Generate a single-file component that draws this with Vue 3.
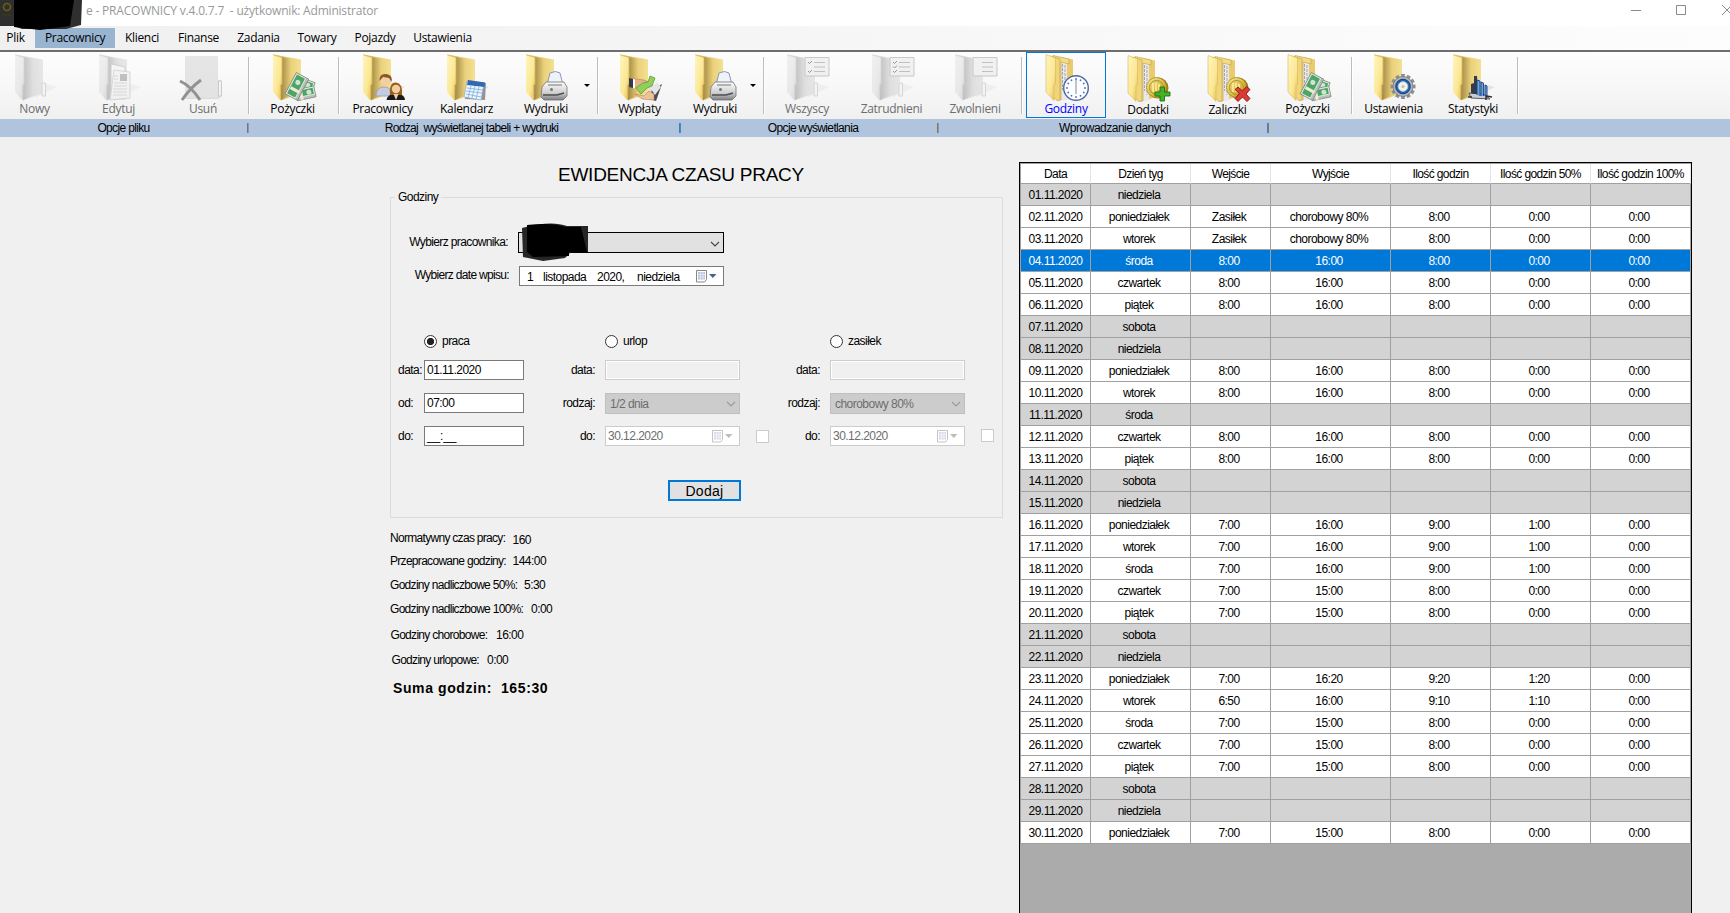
<script setup>
const menu = [
  { t: 'Plik', w: 35, c: 'first' }, { t: 'Pracownicy', w: 80, c: 'on' }, { t: 'Klienci', w: 54 },
  { t: 'Finanse', w: 59 }, { t: 'Zadania', w: 61 }, { t: 'Towary', w: 56 },
  { t: 'Pojazdy', w: 60 }, { t: 'Ustawienia', w: 75 },
]

// w: cell width, m: gap before the cell
const tools = [
  { t: 'Nowy', k: 'new', w: 69, m: 0, off: true },
  { t: 'Edytuj', k: 'edit', w: 99, m: 0, off: true },
  { t: 'Usuń', k: 'del', w: 70, m: 0, off: true },
  { sep: true, w: 2, m: 10 },
  { t: 'Pożyczki', k: 'cash', w: 70, m: 7.5 },
  { sep: true, w: 2, m: 10.5 },
  { t: 'Pracownicy', k: 'people', w: 70, m: 7.5 },
  { t: 'Kalendarz', k: 'cal', w: 70, m: 14 },
  { t: 'Wydruki', k: 'print', w: 70, m: 9.5 },
  { drop: true, w: 12, m: 0 },
  { sep: true, w: 2, m: 4 },
  { t: 'Wypłaty', k: 'pay', w: 70, m: 5.5 },
  { t: 'Wydruki', k: 'print', w: 70, m: 5.5 },
  { drop: true, w: 6, m: 0 },
  { sep: true, w: 2, m: 7 },
  { t: 'Wszyscy', k: 'listA', w: 70, m: 7, off: true },
  { t: 'Zatrudnieni', k: 'listB', w: 70, m: 14.5, off: true },
  { t: 'Zwolnieni', k: 'listC', w: 70, m: 13.5, off: true },
  { sep: true, w: 2, m: 11 },
  { t: 'Godziny', k: 'clock', files: true, w: 80, m: 3, on: true },
  { t: 'Dodatki', k: 'plus', files: true, w: 70, m: 7, low: true },
  { t: 'Zaliczki', k: 'minus', files: true, w: 70, m: 9.5, low: true },
  { t: 'Pożyczki', k: 'cash', files: true, w: 70, m: 10 },
  { sep: true, w: 2, m: 8.5 },
  { t: 'Ustawienia', k: 'gear', w: 70, m: 5.5 },
  { t: 'Statystyki', k: 'chart', w: 70, m: 9.5 },
  { sep: true, w: 2, m: 9 },
]

const groups = [
  { t: 'Opcje pliku', w: 247 }, { t: 'Rodzaj\u00a0 wyświetlanej tabeli + wydruki', w: 432 },
  { t: 'Opcje wyświetlania', w: 258 }, { t: 'Wprowadzanie danych', w: 330 },
]

const stats = [
  { l: 'Normatywny czas pracy:', v: '160', h: 23, x: 0, g: 122.5, d: 2 },
  { l: 'Przepracowane godziny:', v: '144:00', h: 24, x: 0, g: 122.5, d: 0 },
  { l: 'Godziny nadliczbowe 50%:', v: '5:30', h: 24, x: 0, g: 134, d: 0 },
  { l: 'Godziny nadliczbowe 100%:', v: '0:00', h: 26, x: 0, g: 141, d: 0 },
  { l: 'Godziny chorobowe:', v: '16:00', h: 25, x: 0.5, g: 106, d: 0 },
  { l: 'Godziny urlopowe:', v: '0:00', h: 27, x: 1.5, g: 97, d: 0 },
]

const heads = ['Data', 'Dzień tyg', 'Wejście', 'Wyjście', 'Ilość godzin', 'Ilość godzin 50%', 'Ilość godzin 100%']
const days = ['niedziela', 'poniedziałek', 'wtorek', 'środa', 'czwartek', 'piątek', 'sobota']
const e8 = ['8:00', '16:00', '8:00', '0:00', '0:00']
const s8 = ['Zasiłek', 'chorobowy 80%', '8:00', '0:00', '0:00']
const n9 = ['7:00', '16:00', '9:00', '1:00', '0:00']
const n8 = ['7:00', '15:00', '8:00', '0:00', '0:00']
const work = {
  2: s8, 3: s8, 4: e8, 5: e8, 6: e8, 9: e8, 10: e8, 12: e8, 13: e8,
  16: n9, 17: n9, 18: n9, 19: n8, 20: n8,
  23: ['7:00', '16:20', '9:20', '1:20', '0:00'],
  24: ['6:50', '16:00', '9:10', '1:10', '0:00'],
  25: n8, 26: n8, 27: n8, 30: n8,
}
const rows = Array.from({ length: 30 }, (_, i) => {
  const d = i + 1
  return {
    d, free: !work[d], sel: d === 4,
    cells: [String(d).padStart(2, '0') + '.11.2020', days[i % 7], ...(work[d] || ['', '', '', '', ''])],
  }
})
const ticks = Array.from({ length: 12 }, (_, i) => i * 30)
const teeth = Array.from({ length: 12 }, (_, i) => i * 30)
</script>

<template>
  <div class="win">
    <svg class="defs" width="0" height="0">
      <defs>
        <linearGradient id="gFront" x1="0" x2="1" y1="0" y2="1"><stop offset="0" stop-color="#fff6bd" /><stop offset=".6" stop-color="#fbe795" /><stop offset="1" stop-color="#e6bd4b" /></linearGradient>
        <linearGradient id="gBack" x1="0" x2="1"><stop offset="0" stop-color="#c9a24a" /><stop offset=".35" stop-color="#e3c366" /><stop offset="1" stop-color="#f3e193" /></linearGradient>
        <linearGradient id="gShade" x1="0" x2="1"><stop offset="0" stop-color="#000" stop-opacity=".28" /><stop offset="1" stop-color="#000" stop-opacity="0" /></linearGradient>
        <linearGradient id="gSilver" x1="0" x2="0" y1="0" y2="1"><stop offset="0" stop-color="#fbfbfb" /><stop offset=".6" stop-color="#cfcfd0" /><stop offset="1" stop-color="#7c7d80" /></linearGradient>
        <linearGradient id="gCoin" x1="0" x2="1" y1="0" y2="1"><stop offset="0" stop-color="#f8eb9b" /><stop offset=".6" stop-color="#d9b93c" /><stop offset="1" stop-color="#9b7a16" /></linearGradient>
      </defs>
    </svg>

    <header class="titlebar">
      <span class="caption">e - PRACOWNICY v.4.0.7.7&nbsp; - użytkownik: Administrator</span>
      <svg class="controls" width="104" height="26" viewBox="0 0 104 26" fill="none" stroke="#8a8a8a">
        <path d="M5 10.5h10M50.5 5.5h9v9h-9zM96 5l10 10M106 5l-10 10" />
      </svg>
      <svg class="smudge-a" width="84" height="31" viewBox="0 0 84 31">
        <path d="M0 0H82L81 25 66 29H22L14 26H0Z" fill="#1d1d1d" opacity=".92" />
        <path d="M14 0H74L70 26 40 30 14 27Z" fill="#000" />
        <circle cx="7" cy="7" r="3.5" fill="none" stroke="#6b600f" stroke-width="1.5" />
        <path d="M2 15h10" stroke="#4a430d" stroke-dasharray="2 1" />
      </svg>
    </header>

    <nav class="menu">
      <span v-for="m in menu" :key="m.t" :class="m.c" :style="{ width: m.w + 'px' }">{{ m.t }}</span>
    </nav>

    <div class="toolbar">
      <div v-for="(b, i) in tools" :key="i" class="cell" :class="{ off: b.off, on: b.on, low: b.low, sep: b.sep, drop: b.drop }" :style="{ width: b.w + 'px', marginLeft: b.m + 'px' }">
        <template v-if="b.t">
          <svg class="ico" width="48" height="48" viewBox="0 0 48 48">
            <template v-if="b.k === 'del'">
              <path d="M6 2H39V26H42V43L39 45H6Z" fill="#efc863" />
              <path d="M6 2H39V44H6Z" fill="#f3dc86" />
              <path d="M39.500 27h3v15h-3z" fill="#fff" stroke="#c2a24e" />
              <path d="M1 27Q12 32 21 46M22 26Q12 33 3 46" fill="none" stroke="#222" stroke-width="3" />
            </template>
            <template v-else>
              <path v-if="!b.files" d="M24 44L46 33 32 29Z" fill="#000" opacity=".08" />
              <template v-if="!b.files">
                <path d="M4 .5L32 5.500V39L12 46.500Z" fill="url(#gBack)" />
                <path d="M13 3L22 5V41L12 46Z" fill="url(#gShade)" />
                <path d="M4 .5L13 3.500V30L11.500 31V46.500L4 38Z" fill="url(#gFront)" />
                <path d="M4.500 1L13 3.500V30L11.500 31V46" fill="none" stroke="#dcb95a" stroke-width=".8" />
              </template>
              <template v-else>
                <path d="M19 3L31 5.500V42L20 46Z" fill="#eacb6c" />
                <path d="M17 6L25 8V46H17Z" fill="#e9e9ec" />
                <path d="M20.500 10V36M23 11V40" stroke="#a3a7b0" stroke-dasharray="3 1" />
                <path d="M11 1.500L27 5V10L19 8V46L15 46Z" fill="#f3dc86" stroke="#c9a552" stroke-width=".7" />
                <path d="M8 2L18 5V46L15 46.500 8 40Z" fill="#f0d679" stroke="#c9a552" stroke-width=".7" />
                <path d="M4 .5L13.500 4V30L12 31V46.500L4 38Z" fill="url(#gFront)" stroke="#d8b65e" stroke-width=".6" />
              </template>

              <path v-if="b.k === 'new'" d="M31 29h3.500v13H31z" fill="#fff" stroke="#bbb" />
              <g v-if="b.k === 'edit'">
                <path d="M16 10L30 13V45H16Z" fill="#fff" stroke="#999" stroke-width=".8" />
                <path d="M19 16L35 18V44L15 46Z" fill="#fafafa" stroke="#aaa" stroke-width=".8" />
                <path d="M25 20h7v7h-7z" fill="#888" />
                <path d="M19 22h4M19 25h4M19 29h13M19 32h13M18 35h14M18 38h14M18 41h14" stroke="#bbb" />
              </g>
              <g v-if="b.k === 'cash'">
                <g v-for="(n, j) in [[35, 30, 20], [36, 39, -12], [27, 32, -62]]" :key="j" :transform="`translate(${n[0]} ${n[1]}) rotate(${n[2]})`">
                  <path :d="j === 2 ? 'M-12-6H12V8H-12Z' : 'M-9-5H10V6H-9Z'" fill="#b9beb9" stroke="#777f78" stroke-width=".7" />
                  <path :d="j === 2 ? 'M-11-5H11V5H-11Z' : 'M-8-4H9V3H-8Z'" fill="#4da466" stroke="#d9eadb" />
                  <circle cx="4" r="2.500" fill="#cfe5cf" /><path d="M-4-4V6" stroke="#f0ead0" stroke-width="3" />
                </g>
              </g>
              <g v-if="b.k === 'people'">
                <path d="M17 42Q17 33 25 33T33 42Z" fill="#c5cce0" stroke="#8d95b0" stroke-width=".7" />
                <circle cx="26.500" cy="26" r="5.500" fill="#f3cfa6" />
                <path d="M20.500 27Q20 19.500 27 20T32.500 28L30 24 24 23Z" fill="#8b5720" />
                <path d="M27.500 46Q28 40 37 40T46 46Z" fill="#191919" />
                <path d="M31 41Q30 28 37 28.500T43 41Z" fill="#9a5f1b" />
                <circle cx="37" cy="35" r="4.200" fill="#f4cda0" /><path d="M34.500 40h5L37 46Z" fill="#f3d0aa" />
              </g>
              <g v-if="b.k === 'cal'">
                <path d="M24 27L43 29 42 46 22 45Z" fill="#8e949c" />
                <path d="M24 27L41 29 38 46 21 43Z" fill="#eef5fc" stroke="#93a6bb" stroke-width=".7" />
                <path d="M25 26L42 28.500 41.500 33 24 31Z" fill="#3068b4" />
                <path d="M24 34L40 36M23 37L39 39M23 40L38 43M28 32L25 44M32 32L29 44M36 33L33 45" stroke="#78b1e0" stroke-width=".8" />
              </g>
              <g v-if="b.k === 'print'">
                <path d="M25 31L28 19Q34 16 38 19L41 31Z" fill="#edf2fb" stroke="#7f8db0" stroke-width=".9" />
                <path d="M20 33L24 28H42L45 33V42L41 46H22L19 43Z" fill="url(#gSilver)" stroke="#707276" stroke-width=".8" />
                <path d="M21 41H35L42 39" stroke="#4e4f52" stroke-width="1.500" fill="none" /><circle cx="29.500" cy="35.500" r="1.500" fill="#777" />
                <path d="M26 31H40" stroke="#777" />
              </g>
              <g v-if="b.k === 'pay'">
                <path d="M36 36L46 30 40 47 33 45Z" fill="#4a4a50" />
                <path d="M35 35L41 28 45 33 39 41Z" fill="#e4e5e8" />
                <path d="M14 25L20 25 28 26 33 28 29 33 20 34 14 33Z" fill="#e4b184" stroke="#b9814e" stroke-width=".6" />
                <path d="M13 24l4 1v9l-4-1z" fill="#333a4c" /><path d="M17 25l2 .5v9l-2-.5z" fill="#fff" />
                <path d="M19 40L28 42 33 37 38 40 38 46 26 45Z" fill="#ecc399" stroke="#b9814e" stroke-width=".6" />
                <path d="M20 34L27 29 32 28 34 22 39 24 36 32 31 34 25 40Z" fill="#8fcf5a" stroke="#5fa03a" stroke-width=".8" />
              </g>
              <g v-if="b.k.startsWith('list')">
                <path d="M22 3.500H46V22H22Z" fill="#f4f4f4" stroke="#999" /><path d="M31 8.500H42M31 13H42M31 17.500H42" stroke="#888" />
                <path v-if="b.k !== 'listC'" d="M25 8l1.500 1.500L29 7M25 17l1.500 1.500L29 16" fill="none" stroke="#222" />
                <path v-if="b.k === 'listB'" d="M25 12.500l1.500 1.500 2.500-2.500" fill="none" stroke="#222" />
                <path d="M31 29h3.500v13H31z" fill="#fff" stroke="#bbb" />
              </g>
              <g v-if="b.k === 'clock'" transform="translate(34 34)">
                <circle r="12.300" fill="#fcfdff" stroke="#51699c" stroke-width="1.400" />
                <circle v-for="a in ticks" :key="a" r=".9" cy="-9" fill="#4a6fb8" :transform="`rotate(${a})`" />
                <path d="M0-8V6" stroke="#9a9da6" stroke-width="1.200" />
              </g>
              <g v-if="b.k === 'plus' || b.k === 'minus'">
                <circle cx="34" cy="33" r="10.500" fill="#9b7d20" /><circle cx="32.500" cy="32.500" r="10" fill="url(#gCoin)" stroke="#a88a24" stroke-width=".8" /><circle cx="32.500" cy="32.500" r="7" fill="none" stroke="#a98e32" />
                <path d="M29 28v9M32 28v9M35 29v6" stroke="#fff0a0" stroke-width="1.500" />
                <path v-if="b.k === 'plus'" d="M36 32h4.500v5H46v4h-5.500v5H36v-5h-5v-4h5z" fill="#43b02a" stroke="#18750f" stroke-width=".9" />
                <path v-else d="M34 32l4.500 4 4-4.500 3.500 3-4 4.500 4 4.500-3 3-4.500-4.500-4.500 4.500-3-3 4.500-5-4.500-4z" fill="#db3b36" stroke="#8d1512" stroke-width=".9" />
              </g>
              <g v-if="b.k === 'gear'" transform="translate(33 32.500)">
                <path v-for="a in teeth" :key="a" d="M-2-12.500h4L1.500-8h-3z" fill="#8c9096" :transform="`rotate(${a})`" />
                <circle r="10" fill="#b0b3b8" stroke="#74787e" stroke-width=".8" /><circle r="7.300" fill="#2763ad" stroke="#123f7c" /><circle r="4.800" fill="#f4f1e5" stroke="#a9cdf2" /><circle r="1.500" fill="#cbbf94" />
              </g>
              <g v-if="b.k === 'chart'">
                <path d="M20 39L35 40 41 45 22 44Z" fill="#c9ccd2" stroke="#555b66" />
                <path d="M22 39V30l3-1v11M25 40V22h3l1 18" fill="#333c4d" /><path d="M28 41V26l3 1v15M32 42V28l2.500 1v13M36 42V31l2 1v12" fill="#67a4e8" stroke="#1e3f78" stroke-width=".9" />
                <path d="M19 43h4M37 46v-4l6 1" stroke="#333" fill="none" stroke-width="1.500" />
              </g>
            </template>
          </svg>
          <span class="cap">{{ b.t }}</span>
        </template>
        <i v-else-if="b.drop" class="tri"></i>
      </div>
    </div>

    <div class="groups">
      <span v-for="(g, i) in groups" :key="i" :class="'g' + i" :style="{ width: g.w + 'px' }">{{ g.t }}<i></i></span>
    </div>

    <main class="main">
      <section class="left">
        <h1>EWIDENCJA CZASU PRACY</h1>
        <fieldset>
          <legend>Godziny</legend>
          <div class="pick p1">
            <label>Wybierz pracownika:</label>
            <div class="combo strong">
              <svg class="chev" width="10" height="6" viewBox="0 0 10 6"><path d="M1 1l4 4 4-4" /></svg>
              <svg class="smudge-b" width="68" height="40" viewBox="0 0 68 40"><path d="M1 6Q30-2 46 4H67V30H50L44 36 22 39 2 35Z" fill="#262626" /><path d="M6 3Q30 0 45 5L60 5 66 30H48V34L12 35 6 30Z" fill="#000" /></svg>
            </div>
          </div>
          <div class="pick p2">
            <label>Wybierz date wpisu:</label>
            <div class="box date long">
              <span class="d1">1</span><span class="d2">listopada</span><span class="d3">2020,</span><span class="d4">niedziela</span>
              <svg class="calico" width="22" height="13" viewBox="0 0 22 13"><path d="M.5.5h10v9l-2 2.500h-8z" fill="#fff" stroke="#8d8483" /><path d="M2 2h7v7.500h-7z" fill="#b9c5da" /><path d="M2 4.500h7M2 7h7M4.500 2v7.500M7 2v7.500" stroke="#e6ecf6" stroke-width=".8" /><path d="M13 4h7.500l-3.700 4z" fill="#45608c" /></svg>
            </div>
          </div>

          <div class="form">
            <span></span><span class="radio on"><i></i>praca</span>
            <span></span><span class="radio"><i></i>urlop</span>
            <span></span><span class="radio"><i></i>zasiłek</span><span></span>

            <label class="ll">data:</label><div class="box">01.11.2020</div>
            <label class="rl">data:</label><div class="box dead"></div>
            <label class="rl">data:</label><div class="box dead"></div><span></span>

            <label class="ll">od:</label><div class="box">07:00</div>
            <label class="rl">rodzaj:</label><div class="combo dis">1/2 dnia<svg class="chev" width="10" height="6" viewBox="0 0 10 6"><path d="M1 1l4 4 4-4" /></svg></div>
            <label class="rl">rodzaj:</label><div class="combo dis">chorobowy 80%<svg class="chev" width="10" height="6" viewBox="0 0 10 6"><path d="M1 1l4 4 4-4" /></svg></div><span></span>

            <label class="ll">do:</label><div class="box mask">__:__</div>
            <template v-for="n in 2" :key="n">
              <label class="rl"><i v-if="n === 2" class="chk"></i>do:</label>
              <div class="box date grey">30.12.2020
                <svg class="calico" width="22" height="13" viewBox="0 0 22 13"><path d="M.5.5h10v9l-2 2.500h-8z" fill="#fff" stroke="#c9c2c1" /><path d="M2 2h7v7.500h-7z" fill="#d5dbe8" /><path d="M2 4.500h7M2 7h7M4.500 2v7.500M7 2v7.500" stroke="#f6f8fc" stroke-width=".8" /><path d="M13 4h7.500l-3.700 4z" fill="#bdbdb4" /></svg>
              </div>
            </template>
            <span class="last"><i class="chk"></i></span>
          </div>
          <button>Dodaj</button>
        </fieldset>

        <div class="stats">
          <div v-for="s in stats" :key="s.l" class="stat" :style="{ height: s.h + 'px' }">
            <span class="name" :style="{ width: s.g + 'px', paddingLeft: s.x + 'px' }">{{ s.l }}</span>
            <span :style="{ paddingTop: s.d + 'px' }">{{ s.v }}</span>
          </div>
          <div class="sum"><span>Suma godzin:</span><span>165:30</span></div>
        </div>
      </section>

      <section class="table">
        <div class="tr head"><span v-for="h in heads" :key="h">{{ h }}</span></div>
        <div v-for="r in rows" :key="r.d" class="tr" :class="{ free: r.free, sel: r.sel }">
          <span v-for="(c, i) in r.cells" :key="i">{{ c }}</span>
        </div>
      </section>
    </main>
  </div>
</template>

<style>
html, body { margin: 0; overflow: hidden; background: #f0f0f0; }
</style>

<style scoped>
* { box-sizing: border-box; }
.win { width: 1730px; height: 913px; overflow: hidden; background: #f0f0f0; color: #000; display: flex; flex-direction: column; font: 12px/16px "Liberation Sans", Arial, sans-serif; letter-spacing: -.53px; white-space: nowrap; }
.defs { position: absolute; }
.titlebar { position: relative; height: 26px; flex: none; background: #fff; display: flex; justify-content: space-between; }
.caption { padding: 3px 0 0 86px; font: 12px/16px "Open Sans", "Noto Sans", sans-serif; letter-spacing: -.2px; color: #999; }
.controls { flex: none; }
.smudge-a { position: absolute; left: 0; top: 0; z-index: 2; }
.menu { height: 24px; flex: none; display: flex; background: linear-gradient(90deg, #f0f0f0, #fdfdfd); padding-top: 2px; font: 12px/20px "Open Sans", "Noto Sans", sans-serif; letter-spacing: -.3px; }
.menu span { height: 20px; text-align: center; }
.menu .first { padding-right: 4px; }
.menu .on { background: #99b4d1; }
.toolbar { height: 69px; flex: none; display: flex; border-top: 2px solid #6e6e6e; background: linear-gradient(#fdfdfd, #f7f7f7 55%, #f0f0f0); }
.cell { flex: none; height: 67px; display: flex; flex-direction: column; align-items: center; padding-top: 2px; font: 12px/15px "Open Sans", "Noto Sans", sans-serif; letter-spacing: -.3px; }
.ico { flex: none; overflow: visible; }
.cap { margin-top: -1px; }
.off { color: #6d6d6d; }
.off .ico { filter: grayscale(1) contrast(.8) brightness(1.05); opacity: .52; }
.low { padding-top: 3px; }
.on.cell { height: 66px; border: 1px solid #0078d7; padding-top: 1px; color: #00f; }
.sep { height: 57px; margin-top: 5px; background: linear-gradient(90deg, #bdbdbd 50%, #fff 50%); }
.drop { justify-content: center; padding: 0; }
.tri { border: 3px solid transparent; border-top-color: #000; border-bottom: 0; }
.groups { height: 18px; flex: none; background: #b0c4de; display: flex; line-height: 18px; letter-spacing: -.65px; }
.groups span { position: relative; text-align: center; }
.groups i { position: absolute; right: -2px; top: 4px; width: 2px; height: 10px; background: linear-gradient(90deg, #4a86c4 50%, #94704a 50%); }
.groups .g0 i, .groups .g2 i { background: linear-gradient(90deg, #94704a 50%, #6f9fd6 50%); }
.groups .g1 { padding-left: 17px; }
.groups .g1 i { background: linear-gradient(90deg, #2f7fd8 50%, #6a7f9c 50%); }
.groups .g2 { padding-left: 10px; }
.groups .g3 { padding-left: 26px; letter-spacing: -.5px; }
.main { flex: 1; display: flex; align-items: flex-start; min-height: 0; }
.left { width: 613px; margin-left: 390px; padding-top: 27px; }
h1 { margin: 0; padding-left: 168px; font: 19px/22px "Liberation Sans", Arial, sans-serif; letter-spacing: -.25px; }
fieldset { margin: 4px 0 0; padding: 0; height: 328px; border: 1px solid #dcdcdc; min-width: 0; }
legend { margin-left: 4px; padding: 0 3px; line-height: 15px; height: 14px; }
.pick { display: flex; gap: 10px; }
.pick label { width: 117px; text-align: right; line-height: 21px; letter-spacing: -.62px; }
.p1 { margin-top: 28px; }
.p2 { margin-top: 13px; }
.p2 label { width: 118px; line-height: 19px; letter-spacing: -.68px; }
.combo { position: relative; width: 206px; height: 21px; border: 1px solid #000; background: #e1e1e1; }
.chev { position: absolute; right: 3px; top: 7px; fill: none; stroke: #444; stroke-width: 1.1; }
.strong .chev { top: 8px; }
.smudge-b { position: absolute; left: 2px; top: -11px; }
.combo.dis { width: auto; border-color: #bfbfbf; background: #ccc; color: #6d6d6d; padding-left: 4px; line-height: 21px; }
.dis .chev { stroke: #9a9a9a; }
.box { position: relative; height: 20px; border: 1px solid #7a7a7a; background: #fff; padding-left: 2px; line-height: 19px; }
.mask { letter-spacing: -.15px; }
.long { width: 205px; display: flex; line-height: 20px; }
.d1 { margin-left: 5px; width: 16px; }
.d2 { width: 54px; }
.d3 { width: 40px; }
.calico { position: absolute; right: 5px; top: 3px; }
.grey { border-color: #ccc; color: #6d6d6d; }
.dead { border-color: #ccc; background: #f0f0f0; box-shadow: inset 0 0 0 1px #fff; }
.form { margin-top: 48px; display: grid; grid-template-columns: 33px 100px 81px 135px 90px 135px 37px; grid-template-rows: 14px 21px 21px 20px; row-gap: 12px; }
.radio { display: flex; align-items: center; gap: 5px; }
.radio i { width: 13px; height: 13px; border: 1px solid #333; border-radius: 50%; background: #fff; }
.radio.on i { background: radial-gradient(circle, #222 3.3px, #fff 4px); }
.ll { padding-left: 7px; line-height: 21px; }
.rl { display: flex; justify-content: flex-end; padding-right: 10px; line-height: 21px; }
.chk { width: 13px; height: 13px; margin: 4px auto 0 16px; border: 1px solid #ccc; background: #fff; }
.last { display: flex; }
.last .chk { margin-top: 3px; }
button { display: block; margin: 34px 0 0 277px; width: 73px; height: 21px; padding: 0; border: 2px solid #0078d7; background: #e1e1e1; color: #000; font: 14px/19px "Liberation Sans", Arial, sans-serif; letter-spacing: .3px; }
.stats { padding-top: 12px; }
.stat { display: flex; }
.name { letter-spacing: -.7px; }
.sum { display: flex; padding-left: 3px; gap: 9px; font: bold 14px/18px "Liberation Sans", Arial, sans-serif; letter-spacing: .6px; }
.table { margin: 25px 0 0 16px; width: 673px; height: 760px; border: 1px solid #000; background: #ababab; }
.tr { display: grid; grid-template-columns: 71px 100px 80px 120px 100px 100px 100px; grid-template-rows: 100%; height: 22px; background: #fff; }
.tr span { border-right: 1px solid #a0a0a0; border-bottom: 1px solid #a0a0a0; text-align: center; line-height: 23px; height: 22px; padding-right: 3px; }
.tr span:first-child { border-left: 1px solid #a0a0a0; padding-right: 0; }
.tr.head { height: 21px; border-top: 1px solid #a0a0a0; }
.tr.head span { height: 20px; border-right-color: #e5e5e5; line-height: 20px; padding-right: 0; letter-spacing: -.62px; }
.tr.free { background: #d3d3d3; }
.tr.sel { background: #0078d7; color: #fff; }
</style>
